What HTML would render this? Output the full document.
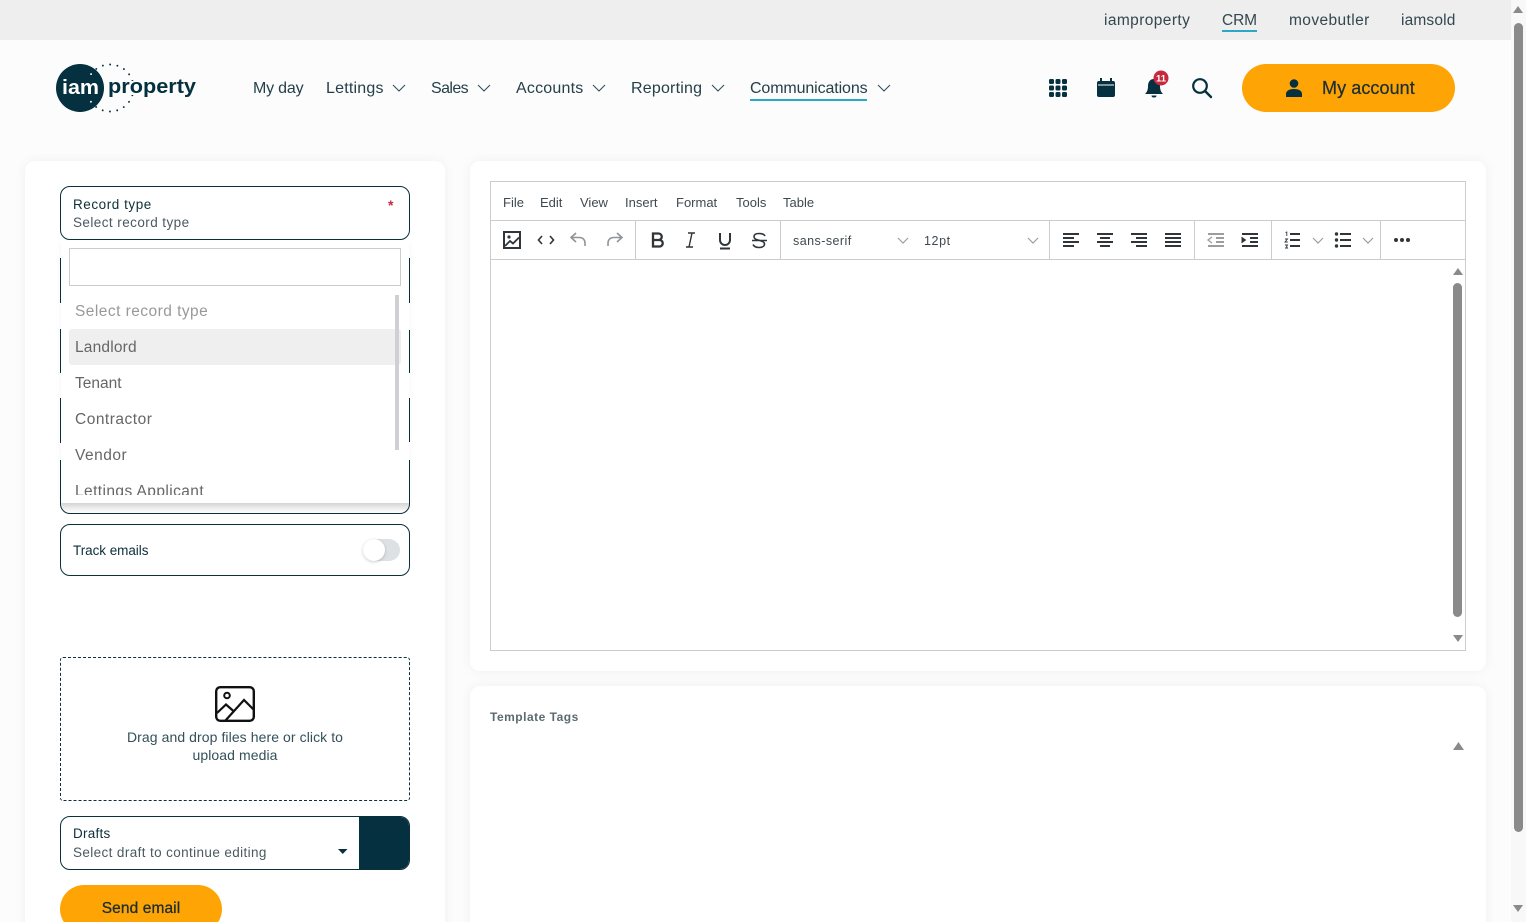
<!DOCTYPE html>
<html lang="en"><head><meta charset="utf-8"><title>Communications</title>
<style>
html,body{margin:0;padding:0;width:1526px;height:922px;overflow:hidden;background:#fcfcfc;font-family:"Liberation Sans",sans-serif;color:#0d2f3a}
#p{position:relative;width:1526px;height:922px;overflow:hidden;background:#fcfcfc}
.t{position:absolute;white-space:nowrap;line-height:20px;height:20px}
.b{position:absolute;box-sizing:border-box}
svg{position:absolute;overflow:visible}
.nav{font-size:16px;color:#24404a;top:79px}
.top{font-size:15.5px;color:#33474f;top:11px}
.card{background:#fff;border-radius:10px;box-shadow:0 0 12px rgba(0,0,0,.05)}
.field{border:1px solid #0b2f3b;border-radius:10px;background:#fff}
.seg{position:absolute;width:1px;background:#0b2f3b}
.menu{font-size:13px;color:#3d4a50;top:193px}
.sep{position:absolute;top:221px;height:38px;width:1px;background:#ccc}
.opt{font-size:15.5px;color:#666;left:75px}
</style></head><body><div id="p">
<div class="b" style="left:0;top:0;width:1511px;height:40px;background:#eee"></div>
<div class="t top" style="left:1104px;letter-spacing:.4px">iamproperty</div>
<div class="t top" style="left:1222px;letter-spacing:-.1px">CRM</div>
<div class="b" style="left:1222px;top:30px;width:35px;height:2px;background:#2aa8c4"></div>
<div class="t top" style="left:1289px;letter-spacing:.4px">movebutler</div>
<div class="t top" style="left:1401px;letter-spacing:.15px">iamsold</div>

<!-- logo -->
<svg style="left:50px;top:58px" width="160" height="60" viewBox="0 0 160 60">
<defs><clipPath id="c"><circle cx="30" cy="30" r="24"/></clipPath></defs>
<circle cx="60" cy="30" r="23.500" fill="none" stroke="#04303f" stroke-width="1.900" stroke-dasharray="0 7.380" stroke-linecap="round"/>
<rect x="56" y="23" width="90" height="14" fill="#fdfdfd"/>
<circle cx="30" cy="30" r="24" fill="#04303f"/>
<circle cx="60" cy="30" r="23.500" fill="none" stroke="#fff" stroke-width="1.900" stroke-dasharray="0 7.380" stroke-linecap="round" clip-path="url(#c)"/>
<rect x="10" y="20" width="42" height="20" fill="#04303f"/>
<text x="12" y="36" font-size="20" font-weight="700" fill="#fff" font-family="Liberation Sans" textLength="37" lengthAdjust="spacingAndGlyphs">iam</text>
<text x="58" y="35" font-size="20" font-weight="700" fill="#04303f" font-family="Liberation Sans" textLength="88" lengthAdjust="spacingAndGlyphs">property</text>
</svg>

<div class="t nav" style="left:253px;letter-spacing:-.2px">My day</div>
<div class="t nav" style="left:326px;letter-spacing:.2px">Lettings</div>
<div class="t nav" style="left:431px;letter-spacing:-.6px">Sales</div>
<div class="t nav" style="left:516px;letter-spacing:.2px">Accounts</div>
<div class="t nav" style="left:631px;letter-spacing:.2px">Reporting</div>
<div class="t nav" style="left:750px;letter-spacing:-.12px">Communications</div>
<div class="b" style="left:750px;top:99px;width:117px;height:2px;background:#2aa8c4"></div>
<svg style="left:0;top:0" width="1000" height="120"><g fill="none" stroke="#33505a" stroke-width="1.100">
<path d="M393 85l6 6 6-6M478 85l6 6 6-6M593 85l6 6 6-6M712 85l6 6 6-6M878 85l6 6 6-6"/></g></svg>

<!-- header icons -->
<svg style="left:1040px;top:70px" width="180" height="36" viewBox="1040 70 180 36">
<g fill="#04303f">
<rect x="1049" y="79" width="5" height="5" rx="1.500"/><rect x="1055.500" y="79" width="5" height="5" rx="1.500"/><rect x="1062" y="79" width="5" height="5" rx="1.500"/>
<rect x="1049" y="85.500" width="5" height="5" rx="1.500"/><rect x="1055.500" y="85.500" width="5" height="5" rx="1.500"/><rect x="1062" y="85.500" width="5" height="5" rx="1.500"/>
<rect x="1049" y="92" width="5" height="5" rx="1.500"/><rect x="1055.500" y="92" width="5" height="5" rx="1.500"/><rect x="1062" y="92" width="5" height="5" rx="1.500"/>
<rect x="1097" y="81" width="18" height="16" rx="2"/>
<rect x="1100" y="78" width="2" height="4"/><rect x="1110" y="78" width="2" height="4"/>
<rect x="1098" y="84.500" width="16" height="1" fill="#fdfdfd"/>
<path d="M1154 79c-4 0-6 3-6 7 0 4-1 6-3 8h18c-2-2-3-4-3-8 0-4-2-7-6-7z"/>
<path d="M1151.500 95.500h5c0 1.500-1 2-2.500 2s-2.500-.5-2.500-2z"/>
</g>
<circle cx="1161" cy="78" r="7.500" fill="#c8283c"/>
<text x="1161" y="81.500" font-size="9.500" font-weight="700" fill="#fff" text-anchor="middle" font-family="Liberation Sans">11</text>
<circle cx="1200" cy="86" r="6.800" fill="none" stroke="#04303f" stroke-width="2.200"/>
<path d="M1205 91l6 6" stroke="#04303f" stroke-width="2.400" stroke-linecap="round"/>
</svg>

<div class="b" style="left:1242px;top:64px;width:213px;height:48px;border-radius:24px;background:#ffa405"></div>
<svg style="left:1285px;top:79px" width="18" height="18" viewBox="0 0 18 18"><circle cx="9" cy="4.500" r="4.300" fill="#04303f"/><path d="M1 18v-3c0-3 3-5 8-5s8 2 8 5v3z" fill="#04303f"/></svg>
<div class="t" style="left:1322px;top:78px;font-size:18px;color:#1c2f30;letter-spacing:.08px;-webkit-text-stroke:.25px #1c2f30">My account</div>

<!-- left card -->
<div class="b card" style="left:25px;top:161px;width:420px;height:790px"></div>
<div class="b field" style="left:60px;top:186px;width:350px;height:54px"></div>
<div class="t" style="left:73px;top:195px;font-size:13.500px;color:#0d2f3a;letter-spacing:.55px">Record type</div>
<div class="t" style="left:73px;top:213px;font-size:13.500px;color:#4a5a60;letter-spacing:.43px">Select record type</div>
<div class="t" style="left:388px;top:195px;font-size:14px;color:#c8283c;font-weight:700">*</div>

<div class="seg" style="left:60px;top:258px;height:45px"></div>
<div class="seg" style="left:60px;top:329px;height:44px"></div>
<div class="seg" style="left:60px;top:398px;height:45px"></div>
<div class="seg" style="left:409px;top:258px;height:45px"></div>
<div class="seg" style="left:409px;top:330px;height:43px"></div>
<div class="seg" style="left:409px;top:398px;height:44px"></div>
<div class="b" style="left:60px;top:460px;width:350px;height:54px;border:1px solid #0b2f3b;border-top:0;border-radius:0 0 10px 10px;background:linear-gradient(#fff 43px,#dcdcdc 43px,#fff 53px)"></div>

<div class="b" style="left:61px;top:240px;width:348px;height:263px;background:#fff;box-shadow:0 2px 6px rgba(0,0,0,.05)"></div>
<div class="b" style="left:69px;top:248px;width:332px;height:38px;border:1px solid #ccc;background:#fff"></div>
<div class="t opt" style="top:302px;color:#999;letter-spacing:.46px">Select record type</div>
<div class="b" style="left:69px;top:329px;width:332px;height:36px;background:#efefef;border-radius:3px"></div>
<div class="b" style="left:395px;top:295px;width:4px;height:155px;background:#cfd0d2"></div>
<div class="t opt" style="top:338px;letter-spacing:.18px">Landlord</div>
<div class="t opt" style="top:374px;letter-spacing:0">Tenant</div>
<div class="t opt" style="top:410px;letter-spacing:.5px">Contractor</div>
<div class="t opt" style="top:446px;letter-spacing:.5px">Vendor</div>
<div class="b" style="left:75px;top:478px;width:300px;height:17px;overflow:hidden"><div class="t opt" style="left:0;top:4px;letter-spacing:.42px">Lettings Applicant</div></div>

<div class="b field" style="left:60px;top:524px;width:350px;height:52px"></div>
<div class="t" style="left:73px;top:541px;font-size:13.500px;color:#0d2f3a;letter-spacing:-.05px">Track emails</div>
<div class="b" style="left:363px;top:539px;width:37px;height:22px;border-radius:11px;background:#dde1e4"></div>
<div class="b" style="left:363px;top:539px;width:22px;height:22px;border-radius:50%;background:#fff;box-shadow:0 1px 3px rgba(0,0,0,.2)"></div>

<div class="b" style="left:60px;top:657px;width:350px;height:144px;border:1px dashed #0b2f3b;border-radius:3px"></div>
<svg style="left:215px;top:686px" width="40" height="36" viewBox="0 0 40 36">
<rect x="1.200" y="1.200" width="37.600" height="33.600" rx="4" fill="none" stroke="#111" stroke-width="2.400"/>
<circle cx="12" cy="9.500" r="2.800" fill="none" stroke="#111" stroke-width="2"/>
<path d="M2 27l9-8.500 8 7M10 35l19-21 9.500 9.500" fill="none" stroke="#111" stroke-width="2.200"/>
</svg>
<div class="t" style="left:60px;width:350px;top:727px;text-align:center;font-size:14px;color:#33505a;letter-spacing:.08px">Drag and drop files here or click to</div>
<div class="t" style="left:60px;width:350px;top:745px;text-align:center;font-size:14px;color:#33505a;letter-spacing:.08px">upload media</div>

<div class="b field" style="left:60px;top:816px;width:350px;height:54px;overflow:hidden"><div class="b" style="left:298px;top:-1px;width:52px;height:56px;background:#04303f"></div></div>
<div class="t" style="left:73px;top:824px;font-size:13.500px;color:#0d2f3a;letter-spacing:.25px">Drafts</div>
<div class="t" style="left:73px;top:843px;font-size:13.500px;color:#4a5a60;letter-spacing:.38px">Select draft to continue editing</div>
<svg style="left:338px;top:849px" width="10" height="6"><path d="M0 0h9.500L4.750 5z" fill="#0b2f3b"/></svg>
<div class="b" style="left:60px;top:885px;width:162px;height:48px;border-radius:24px;background:#ffa405"></div>
<div class="t" style="left:60px;width:162px;top:899px;text-align:center;font-size:15.500px;color:#1c2f30;letter-spacing:.1px;-webkit-text-stroke:.3px #1c2f30">Send email</div>

<!-- editor card -->
<div class="b card" style="left:470px;top:161px;width:1016px;height:510px"></div>
<div class="b" style="left:490px;top:181px;width:976px;height:470px;border:1px solid #ccc"></div>
<div class="b" style="left:491px;top:220px;width:974px;height:1px;background:#ccc"></div>
<div class="b" style="left:491px;top:259px;width:974px;height:1px;background:#ccc"></div>
<div class="t menu" style="left:503px">File</div>
<div class="t menu" style="left:540px">Edit</div>
<div class="t menu" style="left:580px">View</div>
<div class="t menu" style="left:625px">Insert</div>
<div class="t menu" style="left:676px">Format</div>
<div class="t menu" style="left:736px">Tools</div>
<div class="t menu" style="left:783px">Table</div>
<div class="sep" style="left:635px"></div><div class="sep" style="left:780px"></div><div class="sep" style="left:1049px"></div><div class="sep" style="left:1194px"></div><div class="sep" style="left:1271px"></div><div class="sep" style="left:1380px"></div>
<div class="t" style="left:793px;top:231px;font-size:12.500px;color:#3d4a50;letter-spacing:.45px">sans-serif</div>
<div class="t" style="left:924px;top:231px;font-size:12.500px;color:#3d4a50;letter-spacing:.6px">12pt</div>

<svg style="left:0;top:0" width="1526" height="300" viewBox="0 0 1526 300">
<g fill="none" stroke="#2f3539">
<rect x="504" y="232" width="16" height="16" stroke-width="2"/><circle cx="509" cy="237" r="1.600" fill="#2f3539" stroke="none"/>
<path d="M505 246l5-5 3 2.500 6-6" stroke-width="1.800"/>
<path d="M542 236l-3.500 4 3.500 4M550 236l3.500 4-3.500 4" stroke-width="1.600"/>
<g stroke="#8f9497" stroke-width="1.600"><path d="M576 233l-5 4.500 5 4.500M571.500 237.500h8c3.500 0 5.500 2.500 5.500 5.500v3"/><path d="M617 233l5 4.500-5 4.500M621.500 237.500h-8c-3.500 0-5.500 2.500-5.500 5.500v3"/></g>
<path d="M653 233.500h5.500a3 3 0 010 6.500h-5.500zM653 240h6.500a3.200 3.200 0 010 6.500H653z" stroke-width="2.300"/>
<path d="M688 233h7M686 247h7M692 233l-3 14" stroke-width="1.400"/>
<path d="M720 233v7a5 5 0 0010 0v-7M720 248.500h10" stroke-width="2"/>
<path d="M765 236c-1-2-3-2.500-6-2.500-3 0-5 1-5 3.300s2.500 3 5 3.500c3 .6 5.500 1.400 5.500 3.700s-2.500 3.500-5.500 3.500c-3 0-5-1-6-3M752 240.500h15" stroke-width="1.600"/>
<g stroke="#9a9ea1" stroke-width="1.200"><path d="M898 238l5 5 5-5M1028 238l5 5 5-5M1313 238l5 5 5-5M1363 238l5 5 5-5"/></g>
<g stroke-width="2">
<path d="M1063 234h16M1063 238h11M1063 242h16M1063 246h11"/>
<path d="M1097 234h16M1100 238h10M1097 242h16M1100 246h10"/>
<path d="M1131 234h16M1136 238h11M1131 242h16M1136 246h11"/>
<path d="M1165 234h16M1165 238h16M1165 242h16M1165 246h16"/>
<g stroke="#9a9ea1"><path d="M1208 234h16M1216 238h8M1216 242h8M1208 246h16"/></g>
<path d="M1242 234h16M1250 238h8M1250 242h8M1242 246h16"/>
<path d="M1290 234h10M1290 240h10M1290 246h10M1340 234h11M1340 240h11M1340 246h11"/>
</g>
<path d="M1212 237l-4 3 4 3" stroke="#9a9ea1" stroke-width="1.300"/>
<path d="M1242 237.500l3.500 2.500-3.500 2.500z" fill="#2f3539" stroke-width="1"/>
<path d="M1285.500 232.500l1.300-.5v4M1285 239h2.500l-2.500 3h2.800M1285 245h2.500l-1 1.500 1 1.500H1285" stroke-width=".9"/>
</g>
<g fill="#2f3539"><circle cx="1336.500" cy="234" r="1.700"/><circle cx="1336.500" cy="240" r="1.700"/><circle cx="1336.500" cy="246" r="1.700"/>
<circle cx="1396" cy="240" r="2"/><circle cx="1402" cy="240" r="2"/><circle cx="1408" cy="240" r="2"/></g>
<path d="M1453 275l5-7 5 7z" fill="#8a8a8a"/>
</svg>
<div class="b" style="left:1453px;top:283px;width:9px;height:334px;border-radius:5px;background:#8a8a8a"></div>
<svg style="left:1453px;top:635px" width="10" height="8"><path d="M0 0h10L5 7z" fill="#8a8a8a"/></svg>

<!-- template card -->
<div class="b card" style="left:470px;top:686px;width:1016px;height:260px"></div>
<div class="t" style="left:490px;top:707px;font-size:12px;font-weight:700;color:#5b6a70;letter-spacing:.5px">Template Tags</div>
<svg style="left:1453px;top:742px" width="11" height="8"><path d="M0 8l5.500-8L11 8z" fill="#8a8a8a"/></svg>

<!-- page scrollbar -->
<div class="b" style="left:1511px;top:0;width:15px;height:922px;background:#f8f8f8"></div>
<svg style="left:1513px;top:5px" width="10" height="9"><path d="M0 8l5-7 5 7z" fill="#8a8a8a"/></svg>
<div class="b" style="left:1514px;top:23px;width:9px;height:809px;border-radius:5px;background:#8a8a8a"></div>
<svg style="left:1513px;top:905px" width="10" height="9"><path d="M0 0h10L5 7z" fill="#8a8a8a"/></svg>
</div></body></html>
